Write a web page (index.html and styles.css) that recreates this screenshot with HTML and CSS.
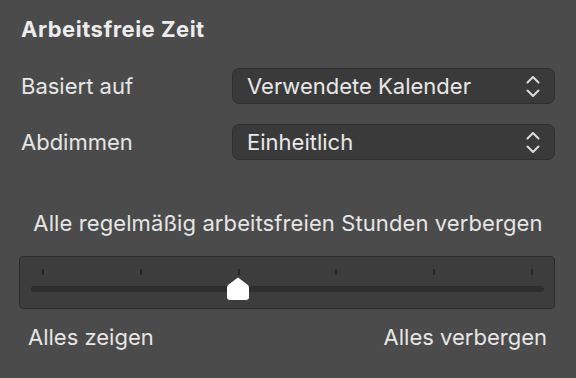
FILE: index.html
```html
<!DOCTYPE html>
<html lang="de">
<head>
  <meta charset="UTF-8" />
  <title>Arbeitsfreie Zeit</title>
  <link rel="stylesheet" href="styles.css">
</head>
<body>
  <div class="panel">
    <h2 class="title">Arbeitsfreie Zeit</h2>

    <div class="row">
      <span class="label">Basiert auf</span>
      <div class="popup">
        <span>Verwendete Kalender</span>
        <svg class="chev" width="14" height="23" viewBox="0 0 14 23">
          <path d="M1.5 7.5 L7 2 L12.5 7.5 M1.5 15.5 L7 21 L12.5 15.5" />
        </svg>
      </div>
    </div>

    <div class="row">
      <span class="label">Abdimmen</span>
      <div class="popup">
        <span>Einheitlich</span>
        <svg class="chev" width="14" height="23" viewBox="0 0 14 23">
          <path d="M1.5 7.5 L7 2 L12.5 7.5 M1.5 15.5 L7 21 L12.5 15.5" />
        </svg>
      </div>
    </div>

    <p class="caption">Alle regelmäßig arbeitsfreien Stunden verbergen</p>

    <div class="slider">
      <div class="ticks">
        <i></i><i></i><i></i><i></i><i></i><i></i>
      </div>
      <div class="track">
        <svg class="thumb" width="22" height="23" viewBox="0 0 22 23">
          <path d="M11 0.5 L21 8 Q22 9 22 10.5 V20 Q22 23 19 23 H3 Q0 23 0 20 V10.5 Q0 9 1 8 Z" />
        </svg>
      </div>
    </div>

    <div class="ends">
      <span>Alles zeigen</span>
      <span>Alles verbergen</span>
    </div>
  </div>
</body>
</html>
```

FILE: styles.css
```css
* { margin: 0; padding: 0; box-sizing: border-box; }
html, body {
  width: 576px;
  height: 378px;
  overflow: hidden;
}
body {
  font-family: Inter, 'Liberation Sans', sans-serif;
  background: #4b4b4b;
  color: #e6e6e6;
}
.panel {
  padding: 17px 21px 0 21px;
}
.title {
  font-size: 22px;
  line-height: 24px;
  font-weight: 700;
  letter-spacing: 0.5px;
  color: #ececec;
  margin-bottom: 27px;
}
.row {
  display: grid;
  grid-template-columns: 211px 323px;
  align-items: center;
  margin-bottom: 20px;
}
.label {
  font-size: 22px;
}
.popup {
  height: 36px;
  display: flex;
  align-items: center;
  justify-content: space-between;
  padding: 0 14px 0 14px;
  background: #3a3a3a;
  border: 1px solid #2f2f2f;
  border-radius: 7px;
  font-size: 22px;
  color: #e8e8e8;
}
.chev path {
  fill: none;
  stroke: #dcdcdc;
  stroke-width: 2;
  stroke-linecap: round;
  stroke-linejoin: round;
}
.caption {
  text-align: center;
  font-size: 22px;
  line-height: 26px;
  letter-spacing: 0.1px;
  margin-top: 50px;
}
.slider {
  margin: 20px 0 0 -2px;
  width: 536px;
  height: 53px;
  background: #3d3d3d;
  border: 1px solid #2c2c2c;
  border-radius: 4px;
  padding: 12px 10px 0 11px;
}
.ticks {
  display: flex;
  justify-content: space-between;
  padding: 0 11px;
  height: 6px;
}
.ticks i {
  width: 2px;
  height: 6px;
  background: #262626;
}
.track {
  position: relative;
  margin-top: 11px;
  height: 6px;
  border-radius: 3px;
  background: #2e2e2e;
}
.thumb {
  position: absolute;
  left: 196px;
  top: -9px;
}
.thumb path {
  fill: #ffffff;
}
.ends {
  display: flex;
  justify-content: space-between;
  font-size: 22px;
  padding: 0 8px 0 7px;
  margin-top: 15px;
}
```
